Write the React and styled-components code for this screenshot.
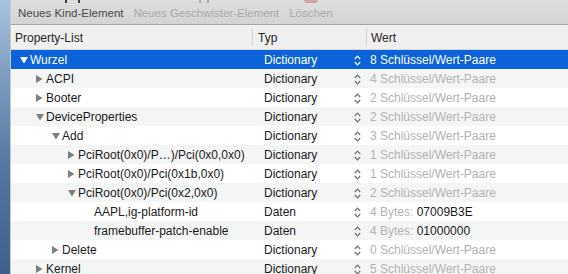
import React from "react";
import styled, { createGlobalStyle } from "styled-components";

const Global = createGlobalStyle`
  html, body { margin: 0; padding: 0; }
  body {
    width: 568px; height: 274px; overflow: hidden;
    font-family: "Liberation Sans", Arial, sans-serif;
    -webkit-font-smoothing: antialiased;
  }
  #root { height: 274px; }
`;

const Screen = styled.div`
  display: flex;
  height: 274px;
  width: 568px;
  overflow: hidden;
`;

const Desktop = styled.div`
  width: 10px;
  flex: none;
  background: linear-gradient(180deg, #a9c3de 0%, #7f9fc4 25%, #56779f 60%, #3f6088 100%);
`;

const Window = styled.div`
  flex: 1;
  display: flex;
  flex-direction: column;
  border-left: 1px solid #c9c9c9;
  background: #fff;
  min-width: 0;
`;

const Toolbar = styled.div`
  height: 24px;
  flex: none;
  display: flex;
  align-items: flex-start;
  gap: 10px;
  padding-left: 7px;
  background: linear-gradient(180deg, #dedede 0%, #d3d3d3 100%);
  border-bottom: 1px solid #a6a6a6;
  overflow: hidden;
`;

const ToolItem = styled.div`
  display: flex;
  flex-direction: column;
  align-items: center;
`;

const IconStub = styled.div`
  height: 6px;
  width: 100%;
  display: flex;
  justify-content: center;
  gap: ${(p) => p.$gap || 10}px;
  margin-left: ${(p) => p.$shift || 0}px;
`;

const Leg = styled.span`
  width: 2px;
  height: 3px;
  background: ${(p) => p.$c};
`;

const RedArc = styled.span`
  width: 14px;
  height: 3px;
  border-radius: 0 0 7px 7px;
  background: #c98b8b;
  opacity: 0.7;
`;

const ToolLabel = styled.span`
  font-size: 11.5px;
  line-height: 14px;
  color: ${(p) => (p.$disabled ? "#a9a9a9" : "#4a4a4a")};
  white-space: nowrap;
`;

const Header = styled.div`
  height: 24px;
  flex: none;
  display: grid;
  grid-template-columns: 241px 114px 1fr;
  background: #f0f0f0;
  border-bottom: 1px solid #d6d6d6;
`;

const HeadCell = styled.div`
  display: flex;
  align-items: center;
  font-size: 12px;
  color: #262626;
  padding-left: ${(p) => p.$pad}px;
  padding-top: 1px;
  border-left: ${(p) => (p.$sep ? "1px solid #d2d2d2" : "none")};
  margin: ${(p) => (p.$sep ? "3px 0" : "0")};
`;

const Rows = styled.div`
  display: flex;
  flex-direction: column;
`;

const Row = styled.div`
  height: 19px;
  flex: none;
  display: grid;
  grid-template-columns: 241px 114px 1fr;
  align-items: center;
  font-size: 12px;
  padding-top: 1px;
  box-sizing: border-box;
  background: ${(p) => (p.$selected ? "#0b62d9" : p.$odd ? "#f4f5f5" : "#ffffff")};
  color: ${(p) => (p.$selected ? "#ffffff" : "#1b1b1b")};
`;

const NameCell = styled.div`
  display: flex;
  align-items: center;
  padding-left: ${(p) => 9 + p.$level * 16}px;
  white-space: nowrap;
  overflow: hidden;
`;

const Toggle = styled.span`
  width: 10px;
  flex: none;
  display: flex;
  align-items: center;
`;

const TypeCell = styled.div`
  display: flex;
  align-items: center;
  justify-content: space-between;
  padding-left: 12px;
  padding-right: 5px;
`;

const ValueCell = styled.div`
  padding-left: 4px;
  white-space: nowrap;
  color: ${(p) => (p.$selected ? "#ffffff" : "#b2b2b2")};
`;

const Strong = styled.span`
  color: #1b1b1b;
`;

const Triangle = ({ open, color }) =>
  open ? (
    <svg width="8" height="7" viewBox="0 0 8 7">
      <polygon points="0,0 8,0 4,6.5" fill={color} />
    </svg>
  ) : (
    <svg width="7" height="8" viewBox="0 0 7 8">
      <polygon points="0,0 6.5,4 0,8" fill={color} />
    </svg>
  );

const Stepper = ({ color }) => (
  <svg width="7" height="11" viewBox="0 0 7 11">
    <polyline points="0.8,4 3.5,1.2 6.2,4" fill="none" stroke={color} strokeWidth="1.2" />
    <polyline points="0.8,7 3.5,9.8 6.2,7" fill="none" stroke={color} strokeWidth="1.2" />
  </svg>
);

const data = [
  { name: "Wurzel", level: 0, toggle: "open", type: "Dictionary", value: "8 Schlüssel/Wert-Paare" },
  { name: "ACPI", level: 1, toggle: "closed", type: "Dictionary", value: "4 Schlüssel/Wert-Paare" },
  { name: "Booter", level: 1, toggle: "closed", type: "Dictionary", value: "2 Schlüssel/Wert-Paare" },
  { name: "DeviceProperties", level: 1, toggle: "open", type: "Dictionary", value: "2 Schlüssel/Wert-Paare" },
  { name: "Add", level: 2, toggle: "open", type: "Dictionary", value: "3 Schlüssel/Wert-Paare" },
  { name: "PciRoot(0x0)/P…)/Pci(0x0,0x0)", level: 3, toggle: "closed", type: "Dictionary", value: "1 Schlüssel/Wert-Paare" },
  { name: "PciRoot(0x0)/Pci(0x1b,0x0)", level: 3, toggle: "closed", type: "Dictionary", value: "1 Schlüssel/Wert-Paare" },
  { name: "PciRoot(0x0)/Pci(0x2,0x0)", level: 3, toggle: "open", type: "Dictionary", value: "2 Schlüssel/Wert-Paare" },
  { name: "AAPL,ig-platform-id", level: 4, toggle: null, type: "Daten", value: "4 Bytes: ", strong: "07009B3E" },
  { name: "framebuffer-patch-enable", level: 4, toggle: null, type: "Daten", value: "4 Bytes: ", strong: "01000000" },
  { name: "Delete", level: 2, toggle: "closed", type: "Dictionary", value: "0 Schlüssel/Wert-Paare" },
  { name: "Kernel", level: 1, toggle: "closed", type: "Dictionary", value: "5 Schlüssel/Wert-Paare" },
];

export default function App() {
  return (
    <>
      <Global />
      <Screen>
        <Desktop />
        <Window>
          <Toolbar>
            <ToolItem>
              <IconStub $gap={11} $shift={4}>
                <Leg $c="#3a3a3a" />
                <Leg $c="#3a3a3a" />
              </IconStub>
              <ToolLabel>Neues Kind-Element</ToolLabel>
            </ToolItem>
            <ToolItem>
              <IconStub $gap={6} $shift={-4}>
                <Leg $c="#a8a8a8" />
                <Leg $c="#a8a8a8" />
              </IconStub>
              <ToolLabel $disabled>Neues Geschwister-Element</ToolLabel>
            </ToolItem>
            <ToolItem>
              <IconStub $shift={0}>
                <RedArc />
              </IconStub>
              <ToolLabel $disabled>Löschen</ToolLabel>
            </ToolItem>
          </Toolbar>
          <Header>
            <HeadCell $pad={4}>Property-List</HeadCell>
            <HeadCell $pad={5} $sep>Typ</HeadCell>
            <HeadCell $pad={4} $sep>Wert</HeadCell>
          </Header>
          <Rows>
            {data.map((r, i) => {
              const sel = i === 0;
              return (
                <Row key={i} $selected={sel} $odd={i % 2 === 1}>
                  <NameCell $level={r.level}>
                    <Toggle>
                      {r.toggle && (
                        <Triangle open={r.toggle === "open"} color={sel ? "#ffffff" : "#7d7d7d"} />
                      )}
                    </Toggle>
                    {r.name}
                  </NameCell>
                  <TypeCell>
                    <span>{r.type}</span>
                    <Stepper color={sel ? "#ffffff" : "#6e6e6e"} />
                  </TypeCell>
                  <ValueCell $selected={sel}>
                    {r.value}
                    {r.strong && <Strong>{r.strong}</Strong>}
                  </ValueCell>
                </Row>
              );
            })}
          </Rows>
        </Window>
      </Screen>
    </>
  );
}
